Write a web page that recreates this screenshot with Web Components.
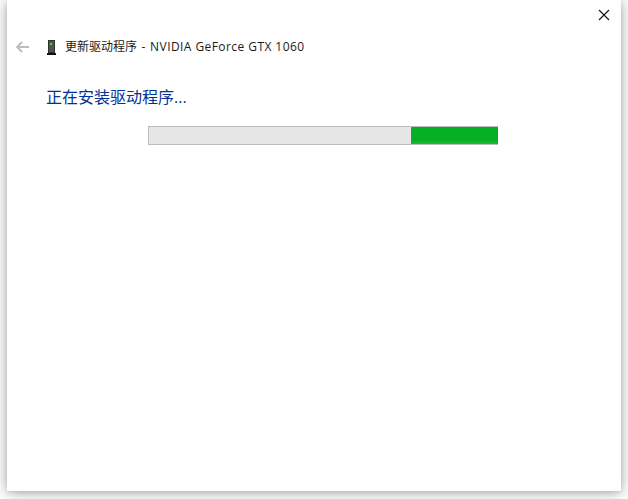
<!DOCTYPE html>
<html><head><meta charset="utf-8">
<style>html,body{margin:0;padding:0;background:#fff;overflow:hidden;height:499px}</style>
</head><body>
<wizard-window>
  <wizard-header slot="header">更新驱动程序 - <span style="letter-spacing:.43px;word-spacing:0">NVIDIA GeForce GTX 1060</span></wizard-header>
  <h-instruction>正在安装驱动程序...</h-instruction>
  <progress-bar value="75"></progress-bar>
</wizard-window>
<script>
const FONT='"Open Sans","Noto Sans","Noto Sans CJK SC",sans-serif';
class WizardWindow extends HTMLElement{constructor(){super();this.attachShadow({mode:'open'}).innerHTML=`<style>
:host{display:block;width:614px;height:491px;margin-left:7px;background:#fff;box-shadow:0 1px 14px rgba(0,0,0,.36),0 2px 4px rgba(0,0,0,.08);font-family:${FONT}}
.close{display:flex;justify-content:flex-end;height:30px;padding:9px 11px 0 0;box-sizing:border-box}
svg{display:block}
</style>
<div class="close"><svg width="12" height="12" viewBox="0 0 12 12"><path d="M1 1L11 11M11 1L1 11" stroke="#111" stroke-width="1.1" fill="none"/></svg></div>
<slot name="header"></slot><slot></slot>`}}
class WizardHeader extends HTMLElement{constructor(){super();this.attachShadow({mode:'open'}).innerHTML=`<style>
:host{display:flex;align-items:center;height:20px;margin-top:7px;padding-left:9px;font:12px/20px ${FONT};color:#1a1a1a;white-space:pre;word-spacing:1.5px}
svg{display:block;flex:none}
.arrow{margin-right:18px}.icon{margin-right:9px}
</style>
<svg class="arrow" width="13" height="12" viewBox="0 0 13 12"><path d="M6 1L1.2 6L6 11M1.2 6H13" stroke="#bdbdbd" stroke-width="2" fill="none"/></svg>
<svg class="icon" width="9" height="15" viewBox="0 0 9 15"><rect x="1" y="0" width="7" height="13" fill="#2f3431"/><rect x="2" y="1" width="5" height="11" fill="#4f5451"/><rect x="3" y="3" width="2" height="2" fill="#27e04a"/><rect x="0" y="13" width="9" height="2" fill="#141414"/></svg>
<slot></slot>`}}
class HInstruction extends HTMLElement{constructor(){super();this.attachShadow({mode:'open'}).innerHTML=`<style>
:host{display:block;margin:29px 0 0 39px;font:16px/22px ${FONT};color:#003399}
</style><slot></slot>`}}
class ProgressBar extends HTMLElement{constructor(){super();this.attachShadow({mode:'open'}).innerHTML=`<style>
:host{display:block;box-sizing:border-box;width:350px;height:19px;margin:18px 0 0 141px;border:1px solid #bcbcbc;background:#e6e6e6}
.track{display:flex;justify-content:flex-end;height:100%}
.fill{width:87px;margin-right:-1px;background:linear-gradient(#06b025 0 78%,#1fb83c)}
</style><div class="track"><div class="fill"></div></div>`}}
customElements.define('wizard-window',WizardWindow);
customElements.define('wizard-header',WizardHeader);
customElements.define('h-instruction',HInstruction);
customElements.define('progress-bar',ProgressBar);
</script>
</body></html>
